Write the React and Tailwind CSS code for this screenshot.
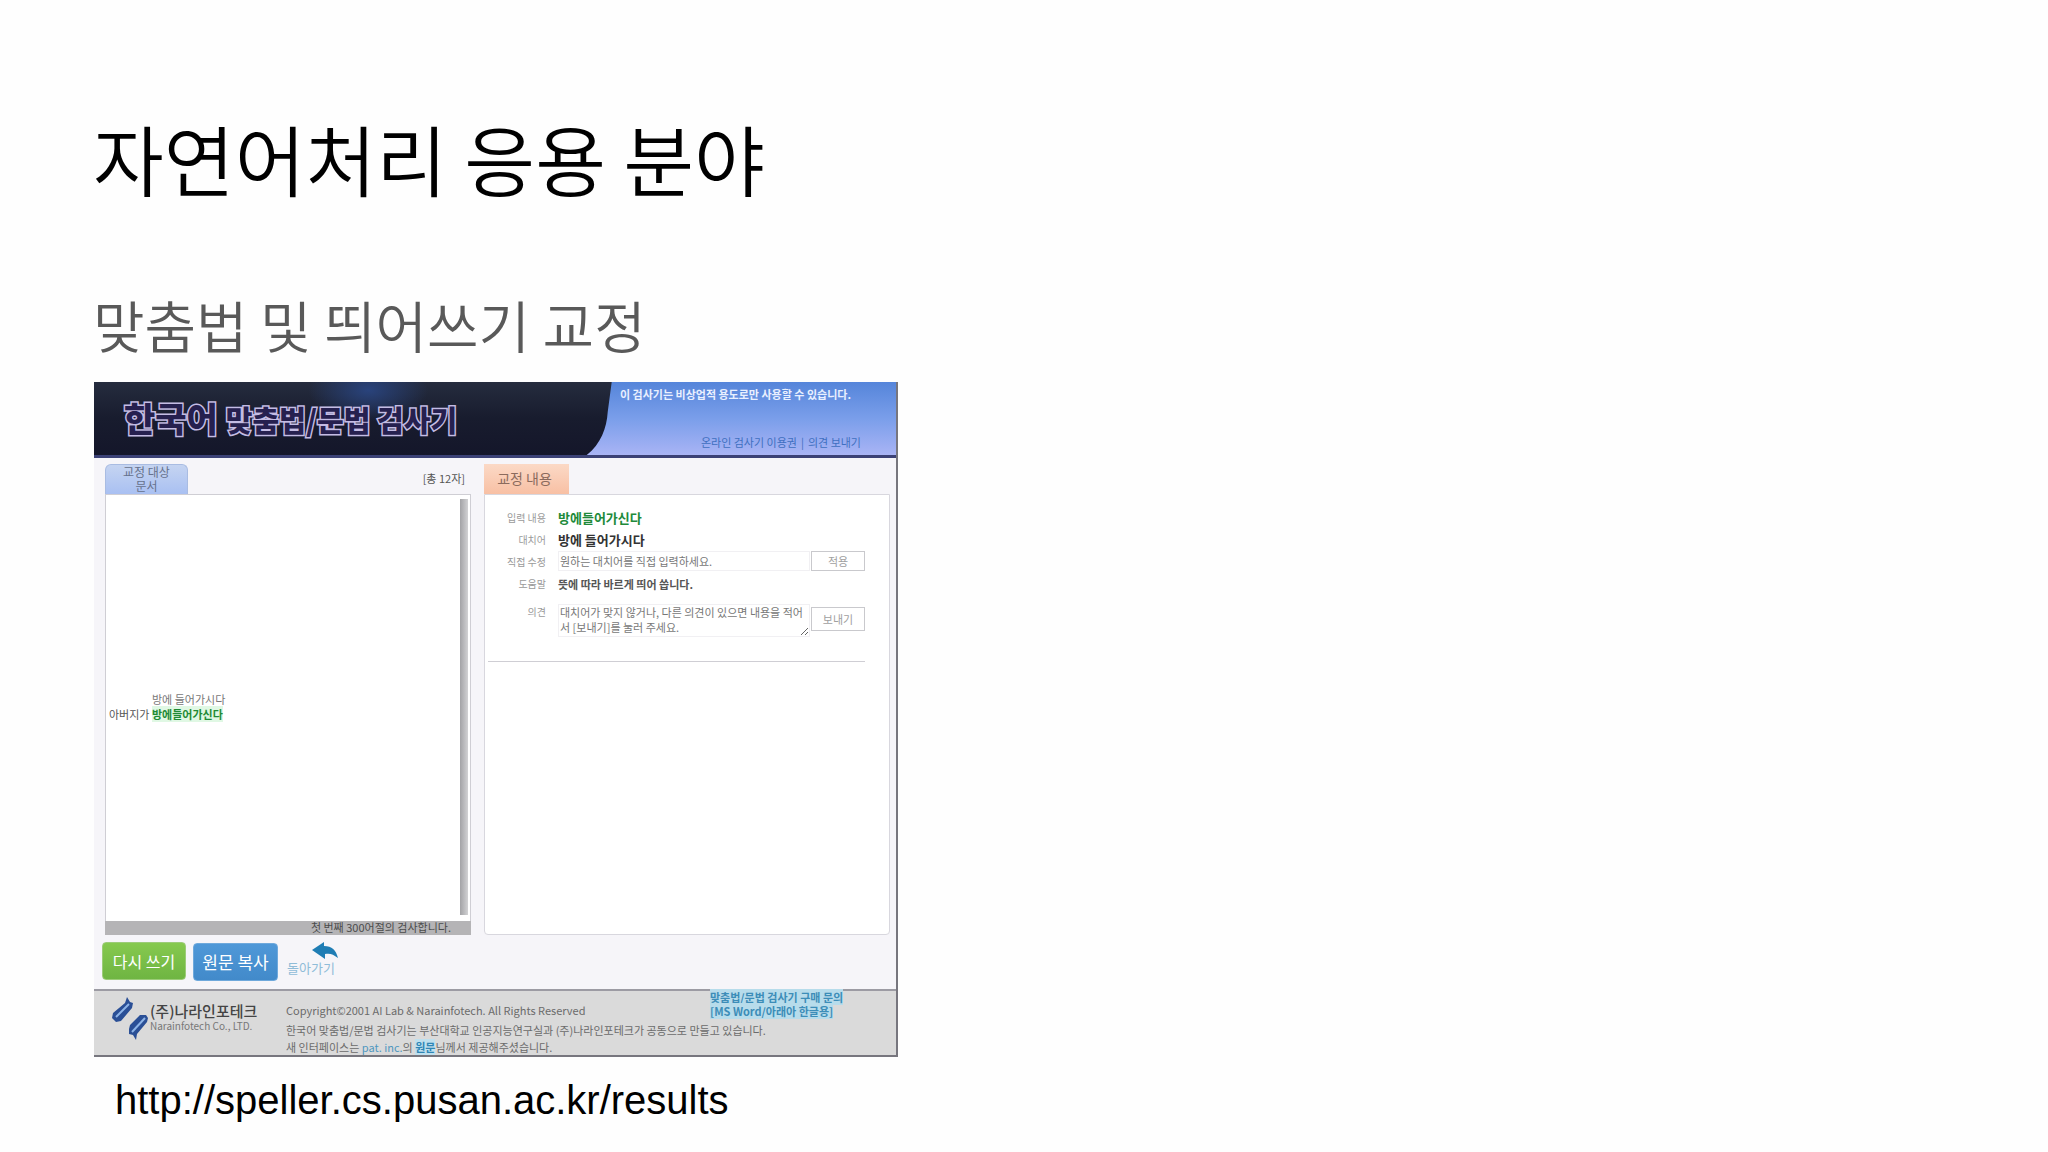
function Banner() {
  return (
    <header className="relative flex h-[76px] items-start justify-between overflow-hidden border-b-[3px] border-[#3b4176] bg-[#141829]">
      <svg
        className="absolute inset-0 h-full w-full"
        viewBox="0 0 804 73"
        preserveAspectRatio="none"
        aria-hidden="true"
      >
        <defs>
          <linearGradient id="sky" x1="0" y1="0" x2="0" y2="1">
            <stop offset="0" stopColor="#5585da" />
            <stop offset="0.5" stopColor="#7a9eea" />
            <stop offset="1" stopColor="#a9b4f5" />
          </linearGradient>
          <linearGradient id="night" x1="0" y1="0" x2="0" y2="1">
            <stop offset="0" stopColor="#252c3e" />
            <stop offset="0.5" stopColor="#181c2e" />
            <stop offset="1" stopColor="#14162a" />
          </linearGradient>
          <radialGradient id="glow">
            <stop offset="0" stopColor="#29437c" />
            <stop offset="1" stopColor="#29437c" stopOpacity="0" />
          </radialGradient>
        </defs>
        <rect width="804" height="73" fill="url(#night)" />
        <ellipse cx="275" cy="8" rx="60" ry="32" fill="url(#glow)" />
        <path d="M519 0H804V73H494C508 62 514 46 515 30Z" fill="url(#sky)" />
      </svg>
      <h3 className="relative flex items-baseline gap-2 pt-3 pl-[30px] leading-[48px] font-black text-[#26204f] [-webkit-text-stroke:3px_#c4bce4] [paint-order:stroke]">
        <span className="text-[34px]">한국어</span>
        <span className="text-[29px]">맞춤법/문법 검사기</span>
      </h3>
      <div className="relative flex h-full flex-col justify-between pt-1 pr-[35px] pb-[5px] text-[11px] leading-4">
        <p className="pr-[10px] font-bold text-[#e9f0ff]">이 검사기는 비상업적 용도로만 사용할 수 있습니다.</p>
        <nav className="flex justify-end gap-1 text-[#3f6fc0]">
          <a href="#license">온라인 검사기 이용권</a>
          <span>|</span>
          <a href="#feedback">의견 보내기</a>
        </nav>
      </div>
    </header>
  )
}

function SourcePanel() {
  return (
    <section className="w-[366px]">
      <div className="flex h-[30px] items-stretch justify-between">
        <h4 className="w-[83px] rounded-t-md border border-b-0 border-[#a9bce2] bg-linear-to-b from-[#c5d4f1] to-[#a9c0f2] text-center text-[12px] leading-[14px] text-[#66718c]">
          교정 대상
          <br />
          문서
        </h4>
        <span className="pr-[6px] text-[11px] leading-7 text-[#555]">[총 12자]</span>
      </div>
      <div className="flex h-[427px] border border-b-0 border-[#cfced4] bg-white pt-1 pr-[2px] pb-[6px]">
        <div className="flex flex-1 flex-col justify-center pl-[3px] text-[11px] leading-[15px]">
          <p className="pl-[43px] text-[#777]">방에 들어가시다</p>
          <p className="text-[#555]">
            아버지가 <strong className="bg-[#e0f8e4] text-[#1f8a35]">방에들어가신다</strong>
          </p>
        </div>
        <div className="w-[8px] bg-linear-to-r from-[#a3a3a6] to-[#d2d2d4]" />
      </div>
      <p className="h-[14px] bg-[#b5b4b6] pr-5 text-right text-[11px] leading-[12px] text-[#4c4c4c]">
        첫 번째 300어절의 검사합니다.
      </p>
    </section>
  )
}

function ResultPanel() {
  const label = 'pr-3 text-right text-[10px] text-[#9a9a9a]'
  const button = 'w-[54px] border border-[#c9c9cd] bg-white text-[11px] text-[#a0a0a0]'

  return (
    <section className="flex-1">
      <h4 className="h-[30px] w-[85px] bg-linear-to-b from-[#fbd9c6] to-[#f8c0a4] pr-1 text-center text-[14px] leading-[28px] text-[#8b6b5d]">
        교정 내용
      </h4>
      <div className="h-[441px] rounded-b-sm border border-[#d8d7de] bg-white pt-3 pr-6 pl-[3px]">
        <div className="grid grid-cols-[70px_1fr_54px] border-b border-[#cfced4] pb-6">
          <span className={`${label} leading-[22px]`}>입력 내용</span>
          <strong className="col-span-2 text-[13px] leading-[22px] text-[#218a3a]">방에들어가신다</strong>

          <span className={`${label} leading-[22px]`}>대치어</span>
          <strong className="col-span-2 text-[13px] leading-[22px] text-[#333]">방에 들어가시다</strong>

          <label htmlFor="fix" className={`${label} leading-[22px]`}>직접 수정</label>
          <input
            id="fix"
            defaultValue="원하는 대치어를 직접 입력하세요."
            className="mr-px h-[20px] min-w-0 border border-[#f1f0f3] px-px text-[11px] text-[#777]"
          />
          <button type="button" className={`${button} h-[20px] leading-[16px]`}>적용</button>

          <span className={`${label} leading-[22px]`}>도움말</span>
          <strong className="col-span-2 text-[11px] leading-[22px] text-[#555]">뜻에 따라 바르게 띄어 씁니다.</strong>

          <label htmlFor="opinion" className={`${label} pt-[6px] leading-[22px]`}>의견</label>
          <textarea
            id="opinion"
            rows={2}
            defaultValue="대치어가 맞지 않거나, 다른 의견이 있으면 내용을 적어서 [보내기]를 눌러 주세요."
            className="mt-[9px] mr-px h-[33px] min-w-0 resize overflow-hidden border border-[#f1f0f3] pl-px text-[11px] leading-[15px] break-all text-[#777]"
          />
          <button type="button" className={`${button} mt-3 h-[24px] leading-[20px]`}>보내기</button>
        </div>
      </div>
    </section>
  )
}

function Actions() {
  return (
    <div className="flex h-[54px] items-start gap-[7px] pt-[7px] pl-2">
      <button
        type="button"
        className="h-[38px] w-[84px] rounded-sm border border-[#9ccc78] bg-linear-to-b from-[#86c94f] to-[#6fb542] text-[16px] text-white"
      >
        다시 쓰기
      </button>
      <button
        type="button"
        className="mt-px h-[38px] w-[85px] rounded-sm border border-[#6fa9dc] bg-linear-to-b from-[#4f98d8] to-[#428aca] text-[17px] text-white"
      >
        원문 복사
      </button>
      <a href="#back" className="flex w-[56px] flex-col pl-[2px] text-[13px] leading-4 text-[#8fbcd8]">
        <svg className="ml-[25px] h-[18px] w-[26px]" viewBox="0 0 26 18" aria-hidden="true">
          <path d="M0 8L12 0V4C20 4 24 8 26 16C21 12 18 11 13 12V17Z" fill="#1f7db4" />
        </svg>
        돌아가기
      </a>
    </div>
  )
}

function CompanyLogo() {
  return (
    <div className="flex w-[174px] shrink-0 items-start pt-[6px]">
      <svg className="h-[44px] w-[38px] shrink-0" viewBox="0 0 38 44" aria-hidden="true">
        <path d="M15 0L18 5L21 6L20 11L9 24L4 25L0 21L1 16L13 6Z" fill="#2a4f96" />
        <path d="M17 7L4 20" fill="none" stroke="#8db4e8" strokeWidth="2" />
        <path d="M17 32L18 28L28 18L34 18L36 21L35 25L25 37L24 43L21 38L17 37Z" fill="#2a4f96" />
        <path d="M33 21L20 35" fill="none" stroke="#8db4e8" strokeWidth="2" />
      </svg>
      <div className="pt-[5px] whitespace-nowrap">
        <p className="text-[15px] leading-[18px] font-medium text-[#444]">(주)나라인포테크</p>
        <p className="text-[10px] leading-[12px] text-[#777]">Narainfotech Co., LTD.</p>
      </div>
    </div>
  )
}

function SiteFooter() {
  return (
    <footer className="relative flex h-[66px] border-t-2 border-[#9c9ba3] bg-[#dadada] pl-[18px] text-[11px] text-[#6b6b6b]">
      <CompanyLogo />
      <div className="pt-[9px] whitespace-nowrap">
        <p className="leading-5">Copyright©2001 AI Lab &amp; Narainfotech. All Rights Reserved</p>
        <p className="leading-5">
          한국어 맞춤법/문법 검사기는 부산대학교 인공지능연구실과 (주)나라인포테크가 공동으로 만들고 있습니다.
        </p>
        <p className="leading-[14px]">
          새 인터페이스는 <a href="#pat" className="text-[#4f97bf]">pat. inc.</a>의{' '}
          <a href="#designer" className="bg-[#bfe0ee] font-bold text-[#2f86b5]">원문</a>님께서 제공해주셨습니다.
        </p>
      </div>
      <a
        href="#buy"
        className="absolute -top-px right-[54px] w-[132px] leading-[14px] font-bold whitespace-nowrap text-[#3c8db8]"
      >
        <span className="bg-[#b7dceb]">맞춤법/문법 검사기 구매 문의</span>
        <br />
        <span className="bg-[#b7dceb]">[MS Word/아래아 한글용]</span>
      </a>
    </footer>
  )
}

export default function App() {
  return (
    <main className="min-h-screen bg-[#fefefe] px-[93px] pt-[110px] font-['Noto_Sans_CJK_KR',sans-serif]">
      <h1 className="text-[77px] leading-[96px] font-[350] text-black">자연어처리 응용 분야</h1>
      <h2 className="pt-[82px] text-[56px] leading-[72px] font-[350] text-[#595959]">맞춤법 및 띄어쓰기 교정</h2>

      <article className="mt-[22px] ml-px max-w-[804px] border-r-2 border-b-2 border-[#77767e] bg-[#f6f5f9]">
        <Banner />
        <div className="flex gap-[13px] pt-[6px] pr-[6px] pl-[11px]">
          <SourcePanel />
          <ResultPanel />
        </div>
        <Actions />
        <SiteFooter />
      </article>

      <a
        href="http://speller.cs.pusan.ac.kr/results"
        className="mt-5 ml-[22px] inline-block font-['Liberation_Sans',sans-serif] text-[40px] leading-[46px] text-black"
      >
        http://speller.cs.pusan.ac.kr/results
      </a>
    </main>
  )
}
